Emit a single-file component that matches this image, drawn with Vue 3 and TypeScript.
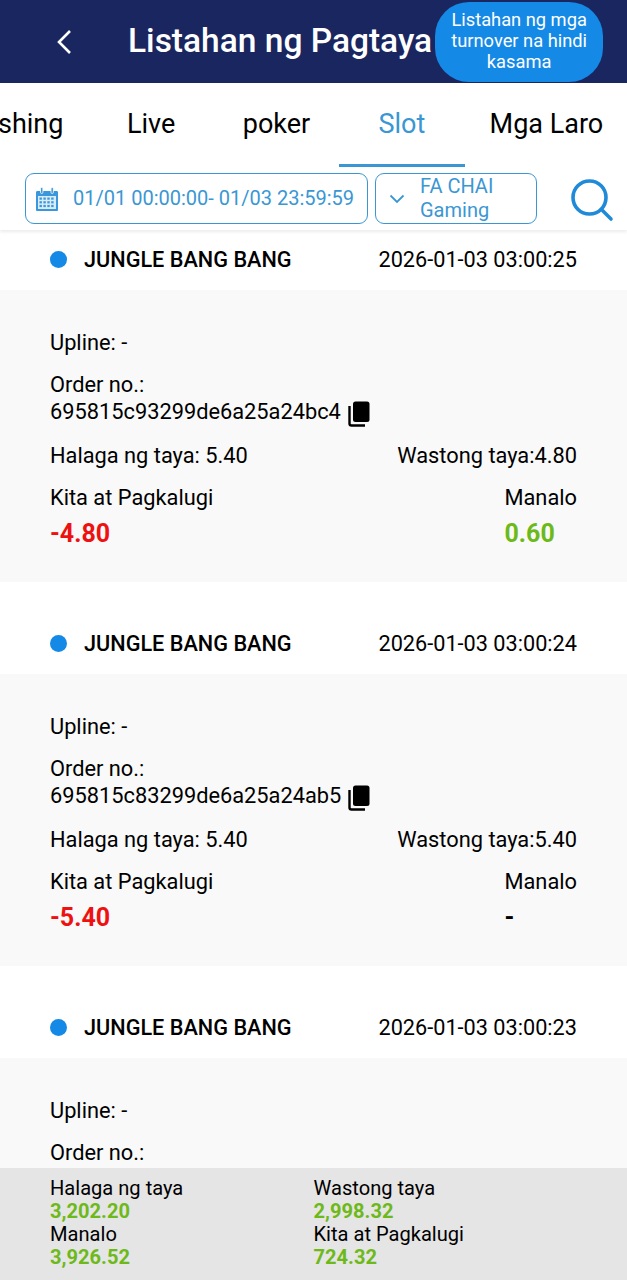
<template>
  <div class="page">
    <header class="topbar">
      <button class="back" aria-label="back">
        <svg width="18" height="26" viewBox="0 0 18 26"><path d="M15 2 L4 13 L15 24" fill="none" stroke="#fff" stroke-width="2.6" /></svg>
      </button>
      <h1 class="title">Listahan ng Pagtaya</h1>
      <button class="turnover">Listahan ng mga turnover na hindi kasama</button>
    </header>

    <nav class="tabs">
      <div v-for="tab in tabs" :key="tab" class="tab" :class="{ active: tab === 'Slot' }">{{ tab }}</div>
    </nav>

    <div class="filters">
      <div class="date-box">
        <svg class="cal" width="24" height="26" viewBox="0 0 24 26">
          <path d="M2 5 h20 a1.500 1.500 0 0 1 1 1.500 V24 a1 1 0 0 1 -1 1 H2 a1 1 0 0 1 -1 -1 V6.500 A1.500 1.500 0 0 1 2 5 Z" fill="#3a97dc" />
          <rect x="3" y="10" width="18" height="13" fill="#d9ecfa" />
          <g fill="#3a97dc">
            <rect v-for="c in calCells" :key="c.k" :x="c.x" :y="c.y" width="2.400" height="2.200" />
          </g>
          <rect x="5.500" y="1.500" width="2.400" height="6" rx="1.200" fill="#3a97dc" stroke="#fff" stroke-width="0.800" />
          <rect x="16" y="1.500" width="2.400" height="6" rx="1.200" fill="#3a97dc" stroke="#fff" stroke-width="0.800" />
        </svg>
        <span class="date-text">01/01 00:00:00- 01/03 23:59:59</span>
      </div>
      <div class="vendor-box">
        <svg class="chev" width="16" height="10" viewBox="0 0 16 10"><path d="M1.500 1.500 L8 8 L14.500 1.500" fill="none" stroke="#3a97d4" stroke-width="1.800" /></svg>
        <span class="vendor-name">FA CHAI Gaming</span>
      </div>
      <button class="search" aria-label="search">
        <svg width="44" height="44" viewBox="0 0 44 44">
          <circle cx="19.500" cy="19.500" r="16.500" fill="none" stroke="#1f8ad8" stroke-width="3.600" />
          <path d="M31.500 31.500 L41 41" fill="none" stroke="#1f8ad8" stroke-width="3.600" stroke-linecap="round" />
        </svg>
      </button>
    </div>

    <main class="list">
      <div class="list-inner">
        <section v-for="r in records" :key="r.time" class="record">
          <div class="rec-head">
            <span class="dot"></span>
            <span class="game">JUNGLE BANG BANG</span>
            <span class="time">{{ r.time }}</span>
          </div>
          <div class="rec-body">
            <div class="line">Upline: -</div>
            <div class="order">
              <div>Order no.:</div>
              <div v-if="r.order" class="order-no">
                {{ r.order }}
                <svg class="copy" width="22" height="26" viewBox="0 0 22 26">
                  <rect x="5" y="0.500" width="16.500" height="20.500" rx="2.500" fill="#000" />
                  <path d="M1.500 5 V22.500 a2 2 0 0 0 2 2 H17" fill="none" stroke="#000" stroke-width="2.400" />
                </svg>
              </div>
            </div>
            <template v-if="r.order">
              <div class="amounts">
                <span>Halaga ng taya: {{ r.bet }}</span>
                <span>Wastong taya:{{ r.valid }}</span>
              </div>
              <div class="stats">
                <span>Kita at Pagkalugi</span>
                <span>Manalo</span>
                <span class="val loss">{{ r.profit }}</span>
                <span class="val" :class="{ win: r.win !== '-' }">{{ r.win }}</span>
              </div>
            </template>
          </div>
        </section>
      </div>
    </main>

    <footer class="summary">
      <div v-for="s in summary" :key="s.label" class="sum-item">
        <div class="sum-label">{{ s.label }}</div>
        <div class="sum-value">{{ s.value }}</div>
      </div>
    </footer>
  </div>
</template>

<script setup lang="ts">
interface BetRecord {
  time: string;
  order?: string;
  bet?: string;
  valid?: string;
  profit?: string;
  win?: string;
}

const tabs = ['Fishing', 'Live', 'poker', 'Slot', 'Mga Laro'];

const records: BetRecord[] = [
  { time: '2026-01-03 03:00:25', order: '695815c93299de6a25a24bc4', bet: '5.40', valid: '4.80', profit: '-4.80', win: '0.60' },
  { time: '2026-01-03 03:00:24', order: '695815c83299de6a25a24ab5', bet: '5.40', valid: '5.40', profit: '-5.40', win: '-' },
  { time: '2026-01-03 03:00:23' },
];

const summary = [
  { label: 'Halaga ng taya', value: '3,202.20' },
  { label: 'Wastong taya', value: '2,998.32' },
  { label: 'Manalo', value: '3,926.52' },
  { label: 'Kita at Pagkalugi', value: '724.32' },
];

const calCells: { k: string; x: number; y: number }[] = [];
for (let row = 0; row < 3; row++) {
  for (let col = 0; col < 4; col++) {
    calCells.push({ k: `${row}-${col}`, x: 4.5 + col * 3.9, y: 11.5 + row * 3.7 });
  }
}
</script>

<style>
html,
body {
  margin: 0;
  background: #fff;
}
</style>

<style scoped>
.page {
  width: 627px;
  height: 1280px;
  overflow: hidden;
  display: flex;
  flex-direction: column;
  font-family: Roboto, "Liberation Sans", sans-serif;
  color: #000;
  background: #fff;
}

button {
  border: none;
  padding: 0;
  background: none;
  font-family: inherit;
}

.topbar {
  height: 83px;
  flex: none;
  display: flex;
  align-items: center;
  background: #1a2660;
  padding-left: 55px;
}

.back {
  width: 18px;
  height: 26px;
  margin-right: 55px;
}

.title {
  margin: 0 0 2px;
  font-size: 33.5px;
  font-weight: 500;
  color: #fff;
  white-space: nowrap;
}

.turnover {
  width: 168px;
  height: 80px;
  margin-left: 3px;
  border-radius: 34px;
  background: #1589e6;
  color: #fff;
  font-size: 18.3px;
  line-height: 21px;
  padding: 0 10px 2px;
}

.tabs {
  height: 84px;
  flex: none;
  display: flex;
  margin-left: -48.5px;
}

.tab {
  flex: none;
  min-width: 125.400px;
  box-sizing: border-box;
  padding: 0 25px;
  display: flex;
  align-items: center;
  justify-content: center;
  font-size: 27px;
  border-bottom: 3px solid transparent;
}

.tab.active {
  color: #3a97d4;
  border-bottom-color: #3a97d4;
}

.filters {
  height: 63px;
  flex: none;
  box-sizing: border-box;
  padding: 6px 0 0 25px;
  display: flex;
  align-items: flex-start;
  box-shadow: 0 2px 3px rgba(0, 0, 0, 0.08);
  position: relative;
  z-index: 1;
  background: #fff;
}

.date-box,
.vendor-box {
  height: 51px;
  box-sizing: border-box;
  border: 1px solid #3a97d4;
  border-radius: 9px;
  display: flex;
  align-items: center;
  color: #3a97d4;
  font-size: 20px;
}

.date-box {
  width: 343px;
  padding-left: 9px;
  white-space: nowrap;
}

.cal {
  flex: none;
  margin-right: 14px;
}

.date-text {
  margin-top: -2px;
}

.vendor-box {
  width: 162px;
  margin-left: 7px;
  padding-left: 13px;
  line-height: 24px;
}

.chev {
  flex: none;
}

.vendor-name {
  width: 100px;
  margin-left: 15px;
  margin-top: -2px;
}

.search {
  width: 44px;
  height: 44px;
  margin-left: 33px;
  margin-top: 5px;
}

.list {
  flex: 1;
  min-height: 0;
  overflow: hidden;
}

.list-inner {
  margin-top: -32px;
}

.rec-head {
  height: 92px;
  box-sizing: border-box;
  padding: 30px 50px 0;
  display: flex;
  align-items: center;
  font-size: 21.7px;
}

.dot {
  width: 17px;
  height: 17px;
  border-radius: 50%;
  background: #1589e6;
  margin-right: 17px;
}

.game {
  font-weight: 500;
  flex: 1;
}

.rec-body {
  height: 292px;
  box-sizing: border-box;
  background: #f9f9f9;
  padding: 39.5px 50px 0;
  font-size: 21.8px;
  line-height: 26px;
}

.order {
  margin-top: 16px;
}

.order-no {
  display: flex;
  align-items: center;
  gap: 7px;
}

.copy {
  margin-top: 3px;
}

.amounts {
  display: flex;
  justify-content: space-between;
  margin-top: 16px;
}

.stats {
  display: grid;
  grid-template-columns: 1fr auto;
  margin-top: 16px;
}

.val {
  margin-top: 8.5px;
  font-size: 25px;
  line-height: 30px;
  font-weight: 700;
}

.loss {
  color: #ee1111;
}

.win {
  color: #6eb91a;
}

.summary {
  height: 112px;
  flex: none;
  box-sizing: border-box;
  padding: 9px 50px 0;
  background: #e5e5e5;
  display: grid;
  grid-template-columns: 263.500px 1fr;
  align-content: start;
  font-size: 20.1px;
  line-height: 23px;
}

.sum-value {
  color: #6eb91a;
  font-weight: 700;
}
</style>
